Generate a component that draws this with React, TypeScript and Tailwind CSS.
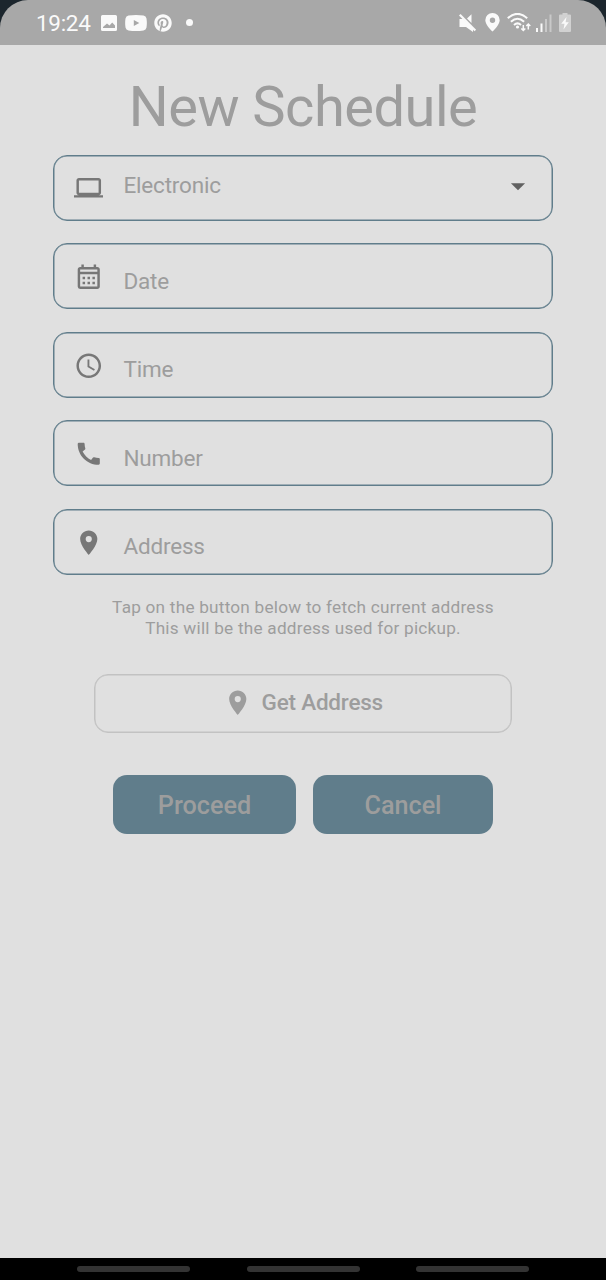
import type { ReactNode } from "react";
import {
  MdArrowDropDown,
  MdCall,
  MdLaptop,
  MdLocationOn,
  MdOutlineCalendarMonth,
  MdSchedule,
} from "react-icons/md";
import { FaPinterest } from "react-icons/fa";

function StatusBar() {
  return (
    <header className="h-[45px] bg-[#1c262d]">
      <div className="flex h-full items-center rounded-t-[28px] bg-[#a8a8a8] pl-9 pr-[35px] text-[#fafafa]">
        <span className="mt-[2px] w-[64.500px] whitespace-nowrap text-[22.500px] leading-none tracking-[-0.3px]">19:24</span>
        <svg className="mt-px h-4 w-4" viewBox="0 0 16 16" fill="currentColor">
          <path
            fillRule="evenodd"
            d="M1.500 0h13A1.500 1.500 0 0 1 16 1.500v13a1.500 1.500 0 0 1-1.500 1.500h-13A1.500 1.500 0 0 1 0 14.500v-13A1.500 1.500 0 0 1 1.500 0zM2 13h12v-2.500L11.200 7.500 8.500 10.500 6 8.500 2 12z"
          />
        </svg>
        <svg className="ml-2 h-4 w-[22px]" viewBox="0 0 22 16" fill="currentColor">
          <path
            fillRule="evenodd"
            d="M3.500.6Q11-.4 18.500.6 21 1 21.500 3.500 22.200 8 21.500 12.500 21 15 18.500 15.400 11 16.400 3.500 15.400 1 15 .500 12.500-.2 8 .500 3.500 1 1 3.500.6zM8.800 5v6L14.300 8z"
          />
        </svg>
        <FaPinterest className="ml-[7px] h-[18px] w-[18px]" />
        <span className="ml-[14px] h-[7px] w-[7px] rounded-full bg-current" />
        <div className="ml-auto flex items-center">
          <svg className="h-[18px] w-[18px]" viewBox="0 0 18 18" fill="currentColor">
            <path d="M.5 5H4l10 9v4L7 13H.5zM8 4.500 12.500.3V9z" />
            <path d="M.8.8 16.300 16.500" stroke="currentColor" strokeWidth="2.200" />
          </svg>
          <svg className="ml-[8px] h-[19px] w-[15px]" viewBox="0 0 15 19" fill="currentColor">
            <path fillRule="evenodd" d="M7.500 0A7.200 7.200 0 0 0 .3 7.200C.3 12 7.500 18.500 7.500 18.500S14.700 12 14.700 7.200A7.200 7.200 0 0 0 7.500 0zm0 4.500a2.700 2.700 0 1 1 0 5.400 2.700 2.700 0 0 1 0-5.400z" />
          </svg>
          <svg className="ml-[7px] h-[19px] w-[25px]" viewBox="0 0 25 19" fill="none" stroke="currentColor" strokeWidth="2">
            <path d="M.8 5.300Q10.500-3.600 20.200 5.300M3.900 8.800Q10.500 2.600 17.100 8.800M7 12Q10.500 8.700 14 12" />
            <circle cx="10.500" cy="14" r="1.600" fill="currentColor" stroke="none" />
            <path strokeWidth="1.500" d="M16.300 12v5.500M14.300 15.500l2 2 2-2M21.300 16.500V11M19.300 13l2-2 2 2" />
          </svg>
          <svg className="ml-[4px] h-[18px] w-[16px]" viewBox="0 0 16 18" fill="currentColor">
            <path d="M0 14h2v4H0zM4.500 9.500h2V18h-2z" />
            <path opacity=".4" d="M9 5h2v13H9zM13.500.5h2V18h-2z" />
          </svg>
          <svg className="ml-[7px] h-[19px] w-[12px]" viewBox="0 0 12 19" fill="currentColor">
            <path opacity=".5" d="M3.500 0h5v1.500H11a1 1 0 0 1 1 1V18a1 1 0 0 1-1 1H1a1 1 0 0 1-1-1V2.500a1 1 0 0 1 1-1h2.500z" />
            <path d="M7.500 4 2.200 10.800h3.300L4.500 16.500l5.300-7.300H6.600z" />
          </svg>
        </div>
      </div>
    </header>
  );
}

function Field({ icon, children, select = false }: { icon: ReactNode; children: ReactNode; select?: boolean }) {
  return (
    <div className="flex h-[66px] shrink-0 rounded-[14px] border border-[#607d8b] pl-[19.500px] pr-[17.500px] text-[29.500px] text-[#777777] shadow-[inset_0_0_0_0.5px_#607d8b]">
      <div className={select ? "mt-[17px]" : "mt-[18px]"}>{icon}</div>
      <span
        className={`ml-[20.500px] text-[22.500px] leading-[26px] tracking-[-0.2px] text-[#9d9d9d] ${
          select ? "mt-[16px]" : "mt-[23.600px]"
        }`}
      >
        {children}
      </span>
      {select && <MdArrowDropDown className="ml-auto mt-[13px] text-[34px] text-[#616161]" />}
    </div>
  );
}

export default function App() {
  return (
    <div className="flex h-[1280px] w-[606px] flex-col overflow-hidden bg-[#e0e0e0] font-['Roboto',sans-serif] text-[#9d9d9d]">
      <StatusBar />
      <main className="flex flex-1 flex-col">
        <h1 className="mt-[29px] h-[81px] whitespace-nowrap text-center text-[56px] leading-[66px] tracking-[-0.5px]">
          New Schedule
        </h1>
        <div className="mx-[53px] flex flex-col gap-[22.400px]">
          <Field icon={<MdLaptop />} select>Electronic</Field>
          <Field icon={<MdOutlineCalendarMonth />}>Date</Field>
          <Field icon={<MdSchedule />}>Time</Field>
          <Field icon={<MdCall />}>Number</Field>
          <Field icon={<MdLocationOn />}>Address</Field>
        </div>
        <p className="mt-[22.400px] text-center text-[17.200px] leading-[21px] tracking-[0.23px]">
          Tap on the button below to fetch current address
          <br />
          This will be the address used for pickup.
        </p>
        <button className="mx-[94px] mt-[34.600px] flex h-[59px] items-center justify-center rounded-[14px] border border-[#c2c2c2] text-[22.500px] font-medium tracking-[-0.2px] shadow-[inset_0_0_0_0.5px_#c2c2c2]">
          <MdLocationOn className="mr-[9px] text-[29.500px]" />
          Get Address
        </button>
        <div className="ml-[113px] mt-[42.400px] flex h-[59px] gap-[17px] text-[25.200px] font-medium">
          <button className="w-[183px] rounded-[14px] bg-[#607d8b] pt-[2px]">Proceed</button>
          <button className="w-[180px] rounded-[14px] bg-[#607d8b] pt-[2px]">Cancel</button>
        </div>
      </main>
      <nav className="flex h-[22px] justify-between bg-black pl-[77px] pr-[77px] pt-[8px]">
        <span className="h-[6px] w-[113px] rounded-full bg-[#333333]" />
        <span className="h-[6px] w-[113px] rounded-full bg-[#333333]" />
        <span className="h-[6px] w-[113px] rounded-full bg-[#333333]" />
      </nav>
    </div>
  );
}
